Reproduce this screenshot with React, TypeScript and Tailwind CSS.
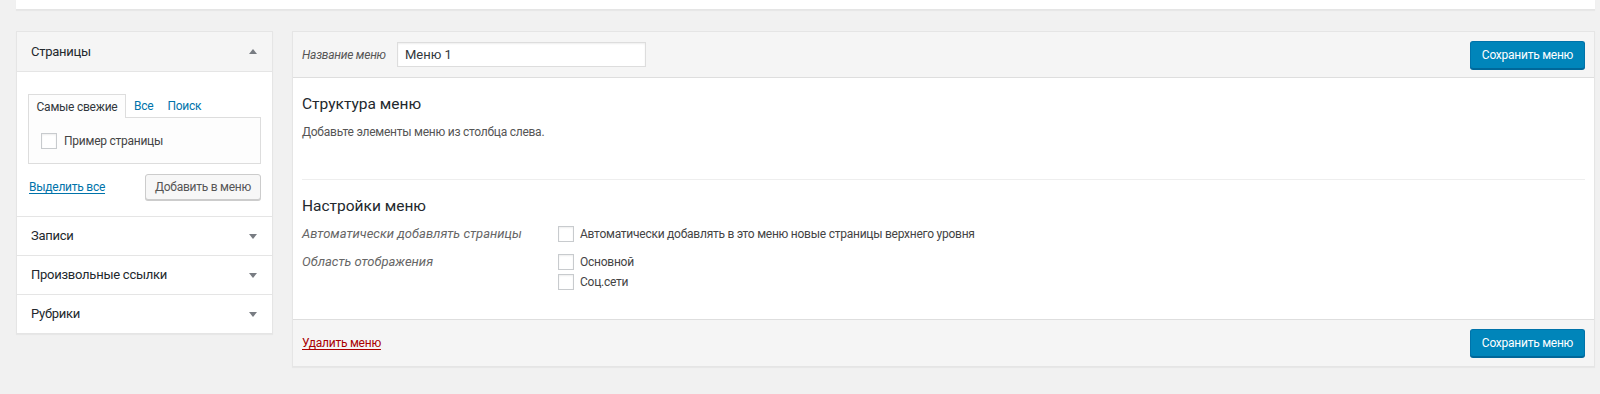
import React from "react";

const Arrow = ({ up }: { up?: boolean }) => (
  <svg width="8" height="5" viewBox="0 0 8 5" className="text-[#787c82]">
    {up ? <polygon points="0,5 8,5 4,0" fill="currentColor" /> : <polygon points="0,0 8,0 4,5" fill="currentColor" />}
  </svg>
);

const Check = () => (
  <span className="inline-block w-4 h-4 shrink-0 border border-[#c8cbce] bg-white shadow-[inset_0_1px_2px_rgba(0,0,0,0.07)]" />
);

const BlueButton = ({ label }: { label: string }) => (
  <button className="h-[28px] w-[115px] rounded-[3px] border border-[#0073aa] border-b-[#006799] bg-[#0085ba] text-[12px] tracking-[-0.25px] text-white shadow-[0_1px_0_#006799]">
    {label}
  </button>
);

const AccordionRow = ({ title }: { title: string }) => (
  <div className="flex h-[39px] items-center justify-between border-t border-[#e5e5e5] pl-[14px] pr-[15px]">
    <h3 className="text-[13px] text-[#23282d]">{title}</h3>
    <Arrow />
  </div>
);

export default function App() {
  return (
    <div className="min-h-[394px] w-full bg-[#f1f1f1] pl-4 pr-[5px] [font-family:Roboto,sans-serif] text-[12px] tracking-[-0.25px] text-[#444]">
      {/* top bar */}
      <div className="h-[10px] border-b border-[#e5e5e5] bg-white shadow-[0_1px_1px_rgba(0,0,0,0.04)]" />

      <div className="mt-[21px] flex items-start gap-[19px]">
        {/* Left column */}
        <div className="w-[257px] shrink-0 border border-[#e5e5e5] bg-white shadow-[0_1px_1px_rgba(0,0,0,0.04)]">
          <div className="flex h-[39px] items-center justify-between bg-[#f5f5f5] pl-[14px] pr-[15px]">
            <h3 className="text-[13px] text-[#23282d]">Страницы</h3>
            <Arrow up />
          </div>
          <div className="border-t border-[#e5e5e5] px-[11px] pb-[16px] pt-[22px]">
            <div className="flex items-end">
              <div className="relative z-10 -mb-px flex h-[24px] w-[98px] items-center justify-center border border-b-0 border-[#ddd] bg-[#fdfdfd] text-[#32373c]">
                Самые свежие
              </div>
              <span className="flex h-[23px] items-center pl-[8px] text-[#0073aa]">Все</span>
              <span className="flex h-[23px] items-center pl-[14px] text-[#0073aa]">Поиск</span>
            </div>
            <div className="flex h-[47px] items-center gap-[7px] border border-[#ddd] bg-[#fdfdfd] pl-[12px]">
              <Check />
              <span className="text-[#444]">Пример страницы</span>
            </div>
            <div className="mt-[10px] flex items-center justify-between">
              <a className="pl-px text-[#0073aa] underline underline-offset-2">Выделить все</a>
              <button className="h-[26px] w-[116px] rounded-[3px] border border-[#ccc] bg-[#f7f7f7] text-[12px] text-[#555] shadow-[0_1px_0_#ccc]">
                Добавить в меню
              </button>
            </div>
          </div>
          <AccordionRow title="Записи" />
          <AccordionRow title="Произвольные ссылки" />
          <AccordionRow title="Рубрики" />
        </div>

        {/* Right column */}
        <div className="flex-1 border border-[#e5e5e5] bg-white shadow-[0_1px_1px_rgba(0,0,0,0.04)]">
          <div className="flex h-[46px] items-center justify-between border-b border-[#dedede] bg-[#f5f5f5] pl-[9px] pr-[9px]">
            <div className="flex items-center">
              <label className="w-[95px] italic text-[#555]">Название меню</label>
              <div className="flex h-[25px] w-[249px] items-center border border-[#ddd] bg-white pl-[7px] text-[13px] tracking-normal text-[#32373c] shadow-[inset_0_1px_2px_rgba(0,0,0,0.07)]">
                Меню 1
              </div>
            </div>
            <BlueButton label="Сохранить меню" />
          </div>

          <div className="px-[9px]">
            <h3 className="pt-[14px] text-[15.5px] leading-[24px] tracking-normal text-[#23282d]">Структура меню</h3>
            <p className="mt-[7px] leading-[18px] text-[#555]">Добавьте элементы меню из столбца слева.</p>

            <div className="mt-[38px] border-t border-[#eee]" />

            <h3 className="pt-[14px] text-[15.5px] leading-[24px] tracking-normal text-[#23282d]">Настройки меню</h3>
            <div className="mt-[7px] flex">
              <div className="w-[256px] shrink-0 text-[13px] italic leading-[18px] tracking-normal text-[#666]">
                Автоматически добавлять страницы
              </div>
              <label className="flex items-center gap-[6px] text-[#444]">
                <Check />
                Автоматически добавлять в это меню новые страницы верхнего уровня
              </label>
            </div>
            <div className="mt-[10px] flex pb-[28px]">
              <div className="w-[256px] shrink-0 text-[13px] italic leading-[18px] tracking-normal text-[#666]">
                Область отображения
              </div>
              <div className="flex flex-col gap-[2px]">
                <label className="flex h-[18px] items-center gap-[6px] text-[#444]">
                  <Check />
                  Основной
                </label>
                <label className="flex h-[18px] items-center gap-[6px] text-[#444]">
                  <Check />
                  Соц.сети
                </label>
              </div>
            </div>
          </div>

          <div className="flex h-[47px] items-center justify-between border-t border-[#dedede] bg-[#f5f5f5] pl-[9px] pr-[9px]">
            <a className="text-[#a00] underline underline-offset-2">Удалить меню</a>
            <BlueButton label="Сохранить меню" />
          </div>
        </div>
      </div>
    </div>
  );
}
